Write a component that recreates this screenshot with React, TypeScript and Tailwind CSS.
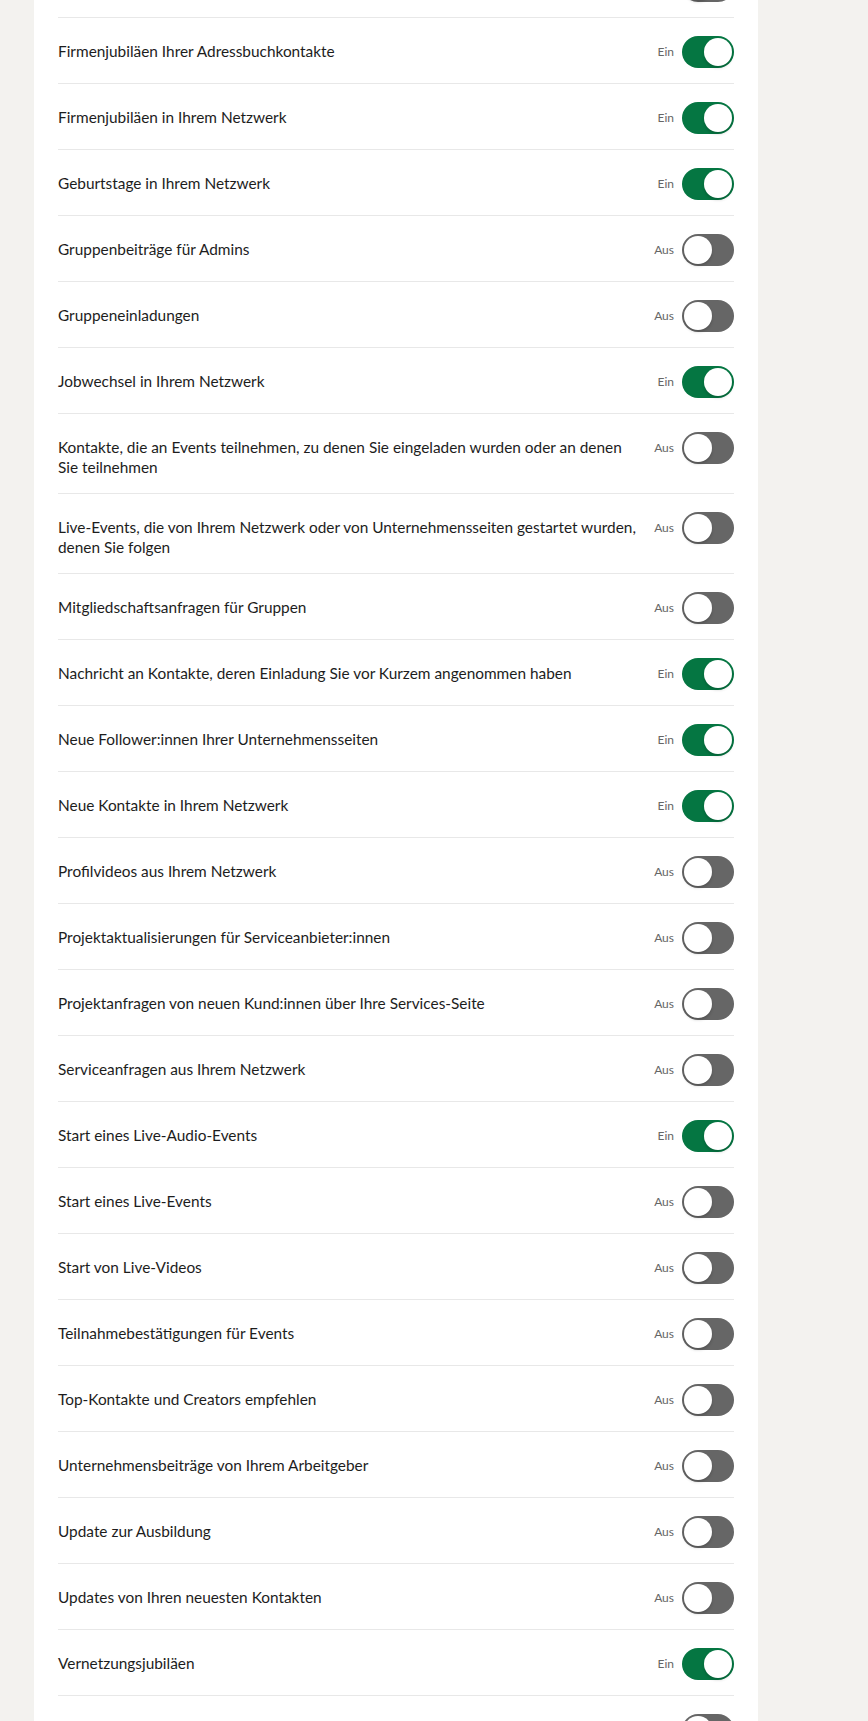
import React from "react";

type Setting = { label: string; on: boolean };

// The list is scrolled: the first and last rows are only partly in view,
// so they carry just their switch.
const settings: Setting[] = [
  { label: "", on: false },
  { label: "Firmenjubiläen Ihrer Adressbuchkontakte", on: true },
  { label: "Firmenjubiläen in Ihrem Netzwerk", on: true },
  { label: "Geburtstage in Ihrem Netzwerk", on: true },
  { label: "Gruppenbeiträge für Admins", on: false },
  { label: "Gruppeneinladungen", on: false },
  { label: "Jobwechsel in Ihrem Netzwerk", on: true },
  {
    label:
      "Kontakte, die an Events teilnehmen, zu denen Sie eingeladen wurden oder an denen Sie teilnehmen",
    on: false,
  },
  {
    label:
      "Live-Events, die von Ihrem Netzwerk oder von Unternehmensseiten gestartet wurden, denen Sie folgen",
    on: false,
  },
  { label: "Mitgliedschaftsanfragen für Gruppen", on: false },
  { label: "Nachricht an Kontakte, deren Einladung Sie vor Kurzem angenommen haben", on: true },
  { label: "Neue Follower:innen Ihrer Unternehmensseiten", on: true },
  { label: "Neue Kontakte in Ihrem Netzwerk", on: true },
  { label: "Profilvideos aus Ihrem Netzwerk", on: false },
  { label: "Projektaktualisierungen für Serviceanbieter:innen", on: false },
  { label: "Projektanfragen von neuen Kund:innen über Ihre Services-Seite", on: false },
  { label: "Serviceanfragen aus Ihrem Netzwerk", on: false },
  { label: "Start eines Live-Audio-Events", on: true },
  { label: "Start eines Live-Events", on: false },
  { label: "Start von Live-Videos", on: false },
  { label: "Teilnahmebestätigungen für Events", on: false },
  { label: "Top-Kontakte und Creators empfehlen", on: false },
  { label: "Unternehmensbeiträge von Ihrem Arbeitgeber", on: false },
  { label: "Update zur Ausbildung", on: false },
  { label: "Updates von Ihren neuesten Kontakten", on: false },
  { label: "Vernetzungsjubiläen", on: true },
  { label: "", on: false },
];

function Toggle({ on, onChange }: { on: boolean; onChange: () => void }) {
  return (
    <button
      type="button"
      role="switch"
      aria-checked={on}
      onClick={onChange}
      className={
        on
          ? "relative h-8 w-[52px] shrink-0 rounded-full bg-[#057642]"
          : "relative h-8 w-[52px] shrink-0 rounded-full bg-[#666666]"
      }
    >
      <span
        className={
          on
            ? "absolute top-[2px] right-[2px] h-7 w-7 rounded-full bg-white shadow-[0_2px_3px_rgba(0,0,0,0.18)]"
            : "absolute top-[2px] left-[2px] h-7 w-7 rounded-full bg-white shadow-[0_2px_3px_rgba(0,0,0,0.18)]"
        }
      />
    </button>
  );
}

function SettingRow({ item, onToggle }: { item: Setting; onToggle: () => void }) {
  return (
    <div className="flex items-start justify-between gap-3 border-b border-[#e8e8e8] pt-[18px] pb-[15px]">
      <p className="mt-[5px] mb-px flex-1 text-[15.4px] leading-5 text-[#1d1d1d]">{item.label}</p>
      <div className="flex h-8 shrink-0 items-center gap-2">
        {item.label && (
          <span className="text-[12px] leading-4 text-[#666666]">{item.on ? "Ein" : "Aus"}</span>
        )}
        <Toggle on={item.on} onChange={onToggle} />
      </div>
    </div>
  );
}

export default function App() {
  const [items, setItems] = React.useState(settings);

  const flip = (i: number) =>
    setItems((prev) => prev.map((s, j) => (j === i ? { ...s, on: !s.on } : s)));

  return (
    <div
      className="h-[1721px] w-full overflow-hidden bg-[#f3f2ef]"
      style={{ fontFamily: '"Lato", "Noto Sans", sans-serif' }}
    >
      <div className="ml-[34px] min-h-full w-[724px] bg-white px-6">
        <div className="-mt-[48px]">
          {items.map((item, i) => (
            <SettingRow key={i} item={item} onToggle={() => flip(i)} />
          ))}
        </div>
      </div>
    </div>
  );
}
